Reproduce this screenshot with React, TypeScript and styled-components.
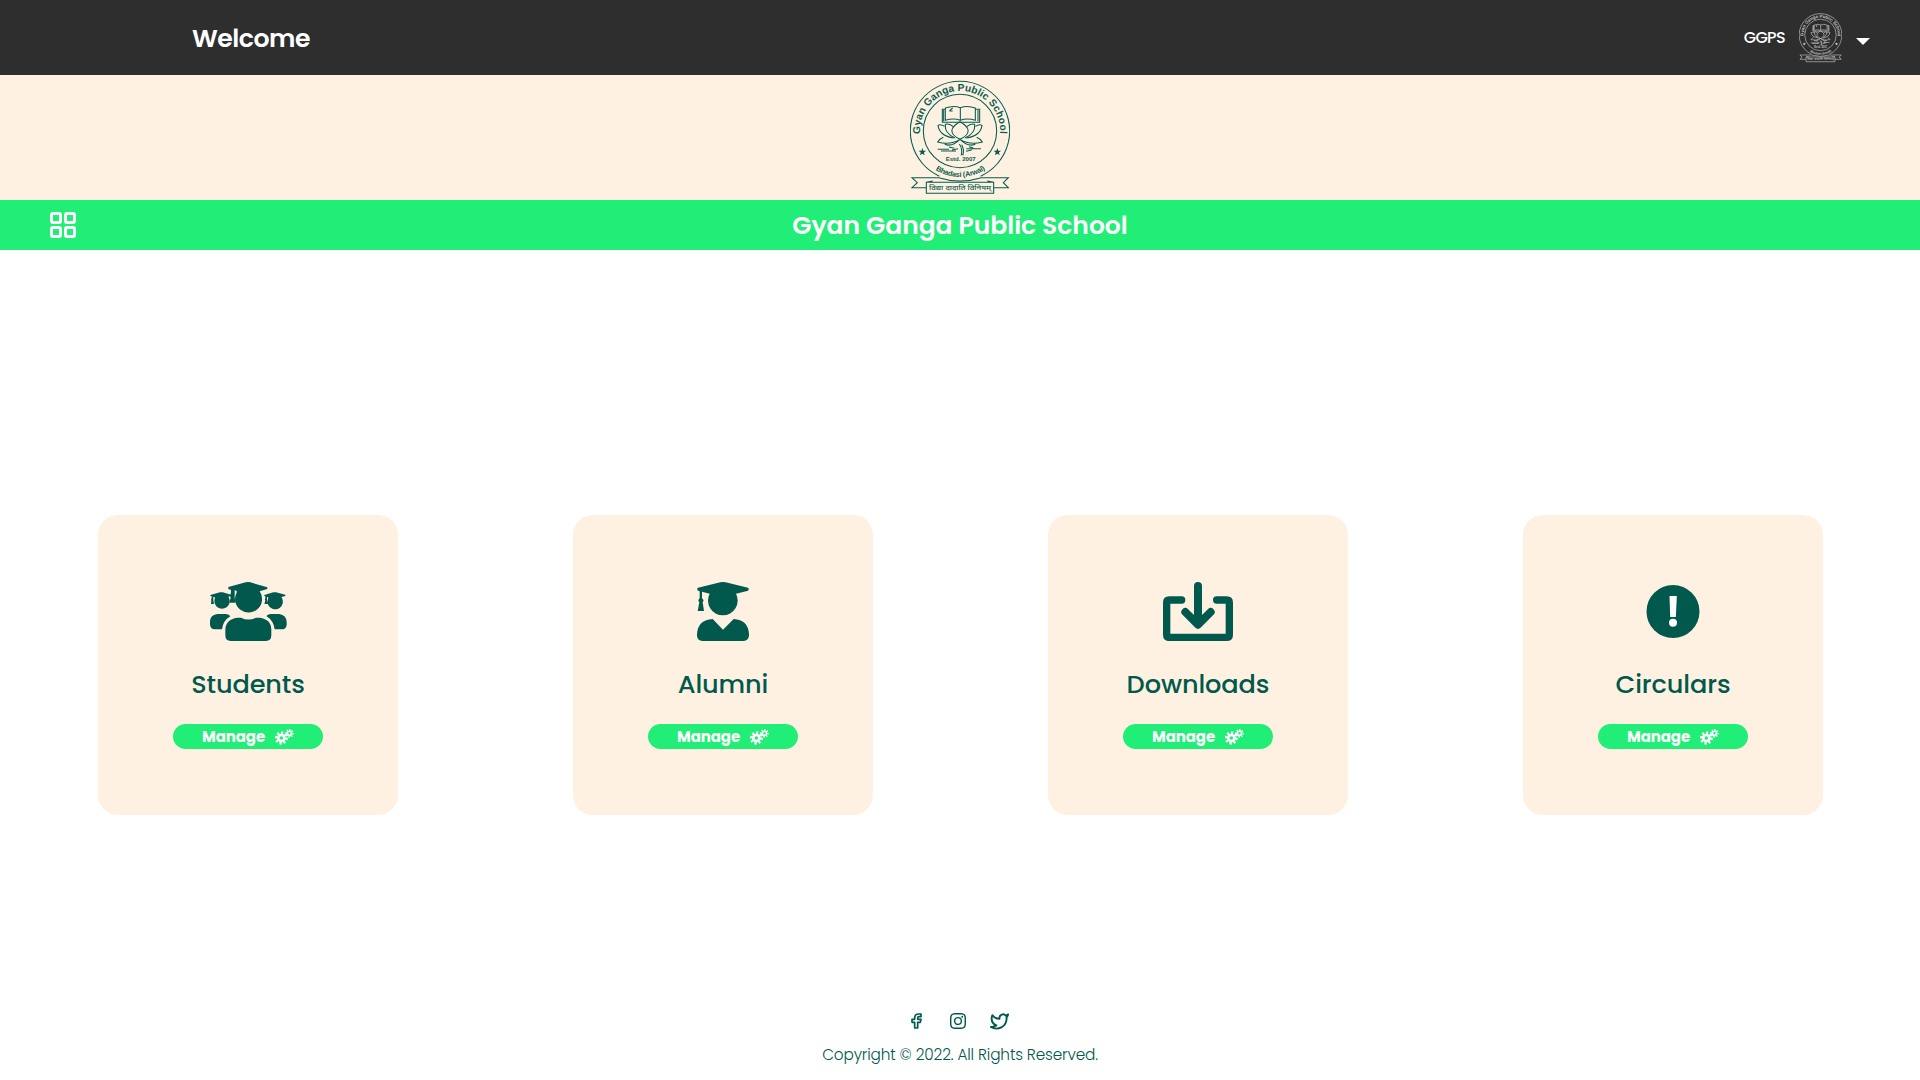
import React from "react";
import styled, { createGlobalStyle } from "styled-components";
import { FiTwitter } from "react-icons/fi";
import { BsInstagram } from "react-icons/bs";

const cream = "#fff1e2";
const green = "#20ee76";
const teal = "#00594c";
const dark = "#2e2e2e";

const GlobalStyle = createGlobalStyle`
  * { box-sizing: border-box; }
  body { margin: 0; background: #fff; font-family: Poppins, Inter, "Open Sans", sans-serif; }
  svg { display: block; flex: none; }
`;

const Page = styled.div`
  display: flex;
  flex-direction: column;
  height: 1080px;
  overflow: hidden;
`;

const TopBar = styled.header`
  display: flex;
  align-items: center;
  justify-content: space-between;
  height: 75px;
  padding: 0 50px 0 192px;
  background: ${dark};
  color: #fff;
`;

const Label = styled.span<{ $size: number; $weight: number; $track?: number }>`
  margin: 0;
  padding-top: 2px;
  font-size: ${(p) => p.$size}px;
  font-weight: ${(p) => p.$weight};
  letter-spacing: ${(p) => p.$track ?? 0}px;
  line-height: 1.5;
  white-space: nowrap;
`;

const Account = styled.div`
  display: flex;
  align-items: center;
`;

const GroupName = styled(Label)`
  padding-top: 0;
`;

const AvatarSlot = styled.div`
  margin: 0 14px 0 14px;
  padding-top: 1px;
`;

const Caret = styled.div`
  margin-top: 7px;
  border: 7.5px solid transparent;
  border-top-color: #fff;
  border-bottom: 0;
`;

const LogoBand = styled.section`
  display: flex;
  justify-content: center;
  height: 125px;
  padding-top: 5px;
  background: ${cream};
`;

const TitleBar = styled.nav`
  display: grid;
  grid-template-columns: 1fr auto 1fr;
  align-items: center;
  height: 50px;
  padding: 0 50px;
  background: ${green};
  color: #fff;
`;

const Main = styled.main`
  display: flex;
  flex: none;
  height: 830px;
  padding: 265px 9.5px 0 10.5px;
`;

const Column = styled.div`
  display: flex;
  flex: 1;
  justify-content: center;
`;

const Card = styled.article`
  display: flex;
  flex-direction: column;
  align-items: center;
  width: 300px;
  height: 300px;
  padding-top: 67px;
  border-radius: 20px;
  background: ${cream};
  color: ${teal};
`;

const CardIcon = styled.div`
  display: flex;
  align-items: center;
  height: 59px;
`;

const CardTitle = styled.h2`
  height: 38px;
  margin: 24px 0 21px;
  font-size: 25.6px;
  font-weight: 500;
  line-height: 38px;
  letter-spacing: -0.1px;
`;

const ManageButton = styled.button`
  display: flex;
  align-items: center;
  width: 150px;
  height: 25px;
  padding: 0 0 0 29px;
  border: 0;
  border-radius: 13px;
  background: ${green};
  color: #fff;
  font-family: inherit;
  gap: 10px;
`;

const Footer = styled.footer`
  display: flex;
  flex-direction: column;
  align-items: center;
  margin-top: -68px;
  color: ${teal};
`;

const Socials = styled.div`
  display: flex;
  align-items: center;
  height: 18px;
  margin-bottom: 12px;
`;

const InstagramSlot = styled.div`
  margin: 0 24px 0 28px;
`;

const starPoints = (cx: number, cy: number, r: number) =>
  Array.from({ length: 10 }, (_, i) => {
    const a = (Math.PI / 5) * i - Math.PI / 2;
    const q = i % 2 ? r * 0.42 : r;
    return `${cx + q * Math.cos(a)},${cy + q * Math.sin(a)}`;
  }).join(" ");

function Emblem({ width, color, id, stroke }: { width: number; color: string; id: string; stroke: number }) {
  const sans = '"Liberation Sans", Arial, sans-serif';
  return (
    <svg width={width} height={width * 1.15} viewBox="90 30 300 345" fill="none" stroke={color} strokeWidth={stroke}>
      <defs>
        <path id={`${id}-top`} d="M120.600 195 A120 120 0 1 1 359.400 195" />
        <path id={`${id}-bottom`} d="M129.800 266 A138 138 0 0 0 350.200 266" />
      </defs>
      <path d="M178 318.500 A149 149 0 1 1 302 318.500" />
      <circle cx="240" cy="183" r="110" />
      <g fill={color} stroke="none" fontFamily={sans} fontWeight="700">
        <text fontSize="30.500"><textPath href={`#${id}-top`} textLength="394" startOffset="3">Gyan Ganga Public School</textPath></text>
        <text fontSize="22"><textPath href={`#${id}-bottom`} textLength="158" startOffset="50">Bhadasi (Arwal)</textPath></text>
        <text x="197" y="273" fontSize="18" textLength="90" lengthAdjust="spacingAndGlyphs">Estd. 2007</text>
        <text x="147" y="361" fontSize="21" fontWeight="500" fontFamily={'"Noto Sans Devanagari", "Noto Sans", sans-serif'} textLength="186" lengthAdjust="spacingAndGlyphs">विद्या दादाति विनियम्</text>
        <polygon points={starPoints(127, 246, 12)} />
        <polygon points={starPoints(352, 246, 12)} />
      </g>
      <path d="M196 114 Q220 105 241 113 Q262 105 286 114 V151 Q262 143 241 151 Q220 143 196 151Z M241 113V151 M196 118H187V157H299V118H286 M191 120V154 M294 120V154 M209 122l9-8 M208 123h10" />
      <path d="M240 155 C209 172 206 192 240 208 C274 192 271 172 240 155Z" />
      <path d="M220 170 Q207 159 196 163 Q193 190 225 204 M260 170 Q273 159 284 163 Q287 190 255 204" />
      <path d="M194 169 Q181 161 174 166 Q178 197 221 204 M286 169 Q299 161 306 166 Q302 197 259 204" />
      <path d="M190 202 Q178 207 173 216 Q211 226 240 208 Q269 226 307 216 Q302 207 290 202 M194 222 Q214 233 240 208 Q266 233 286 222" />
      <path d="M245 224 Q253 238 249 254 H244 Q248 236 238 222 M173 238H207 M183 243H228 M207 231L223 235 M216 240L234 236 M259 236H303 M267 230L280 234 M258 244L275 240" />
      <path d="M139 337H341V370H139Z M139 353H96L112 338L96 323H176 Q240 343 304 323H385L370 338L385 353H341 M139 337L158 333 M341 337L322 333" />
    </svg>
  );
}

function DashboardIcon() {
  return (
    <svg width="26" height="26" viewBox="0 0 26 26" fill="none" stroke="#fff" strokeWidth="3">
      {[1.5, 15.5].map((x) => [1.5, 15.5].map((y) => <rect key={`${x}-${y}`} x={x} y={y} width="9" height="9" rx="1.4" />))}
    </svg>
  );
}

function StudentsIcon() {
  return (
    <svg width="77" height="59" viewBox="359 231 231 177" overflow="visible" fill="currentColor">
      <path d="M414 246L466 232Q473 230 480 232L531 247V252L508 259A40.500 40.500 0 1 1 439 263Q438 260 440 258L433 256V277L435 293H417L421 278Q418 274 421 270Q419 266 422 263V255L414 252Z" />
      <path d="M360 270L389 262Q393 261 397 262L422 269V273L414 275A23 23 0 1 1 373 282L374 277L369 276V285L371 297H362L363 287Q361 283 364 280V274L360 273Z" />
      <path d="M522 270L549 262Q553 261 557 262L585 269V273L573 276A23 23 0 1 1 533 282L534 277L530 276V285L533 297H522L525 287Q522 283 525 280V274L522 273Z" />
      <path d="M441 338H452Q474 349 497 338H508Q543 343 543 374V391Q543 408 527 408H421Q405 408 405 391V376Q405 343 441 338Z" />
      <path d="M382 327H407Q417 328 420 334Q398 347 395 373H374Q359 373 359 358V347Q361 329 382 327Z M541 327H567Q588 330 589 351V359Q588 373 573 373H553Q550 347 528 333Q533 327 541 327Z" />
    </svg>
  );
}

function AlumniIcon() {
  return (
    <svg width="52" height="59" viewBox="111 66 156 177" fill="currentColor">
      <path d="M114 83L181 67Q189 65 197 67L264 83Q269 87 264 92L228 101A44.500 44.500 0 1 1 149 101L126 95V115Q134 121 128 127L132 153H113L118 127Q112 121 119 115V94L114 92Q109 87 114 83Z" />
      <path d="M158 177L189 209L221 177Q264 179 267 222V227Q265 241 251 243H127Q112 241 111 227V222Q114 179 158 177Z" />
    </svg>
  );
}

function DownloadsIcon() {
  return (
    <svg width="70" height="59" viewBox="189 66 210 177" fill="none" stroke="currentColor" strokeLinecap="round" strokeLinejoin="round">
      <path d="M245 120H208Q200 120 200 128V224Q200 232 208 232H380Q388 232 388 224V128Q388 120 380 120H350" strokeWidth="22" />
      <path d="M294 78V188M256 156L294 194L332 156" strokeWidth="24" />
      <path d="M282 178H306L294 194Z" fill="currentColor" strokeWidth="8" />
    </svg>
  );
}

function CircularsIcon() {
  return (
    <svg width="53" height="53" viewBox="201.500 75 159 159" overflow="visible">
      <circle cx="279.500" cy="154.500" r="79.500" fill="currentColor" />
      <path d="M269 108H291L288 171H271Z" fill="#fff" />
      <circle cx="279.500" cy="188" r="12" fill="#fff" />
    </svg>
  );
}

const gearPath = (cx: number, cy: number, outer: number, root: number, hole: number, turn: number) => {
  const points: string[] = [];
  for (let i = 0; i < 8; i++) {
    const mid = (Math.PI / 4) * i + turn;
    [[-0.25, root], [-0.18, outer], [0.18, outer], [0.25, root]].forEach(([d, r]) =>
      points.push(`${(cx + r * Math.cos(mid + d)).toFixed(2)} ${(cy + r * Math.sin(mid + d)).toFixed(2)}`)
    );
  }
  return `M${points.join("L")}Z M${cx - hole} ${cy}a${hole} ${hole} 0 1 0 ${hole * 2} 0a${hole} ${hole} 0 1 0 ${-hole * 2} 0Z`;
};

function GearsIcon() {
  return (
    <svg width="19" height="16" viewBox="555 671 57 48" fill="#fff" fillRule="evenodd">
      <path d={gearPath(574, 698, 20, 13, 5.5, 0.15)} />
      <path d={gearPath(598.5, 684, 13, 8.5, 3.8, 0.1)} />
    </svg>
  );
}

function FacebookIcon() {
  return (
    <svg width="11" height="16" viewBox="0 0 33 48" fill="none" stroke="currentColor" strokeWidth="5" strokeLinejoin="round">
      <path d="M30 3H23Q11 3 11 15V19H3V28H11V45H20V28H28L30 19H20V15Q20 11 24 11H30Z" />
    </svg>
  );
}

const cards = [
  { title: "Students", icon: <StudentsIcon /> },
  { title: "Alumni", icon: <AlumniIcon /> },
  { title: "Downloads", icon: <DownloadsIcon /> },
  { title: "Circulars", icon: <CircularsIcon /> },
];

export default function App() {
  return (
    <Page>
      <GlobalStyle />
      <TopBar>
        <Label $size={25.2} $weight={600} $track={-0.5}>Welcome</Label>
        <Account>
          <GroupName $size={16} $weight={500} $track={-0.65}>GGPS</GroupName>
          <AvatarSlot><Emblem width={43} color="#c4c4c4" id="avatar" stroke={4.5} /></AvatarSlot>
          <Caret />
        </Account>
      </TopBar>
      <LogoBand><Emblem width={100} color="#065d50" id="school" stroke={3.2} /></LogoBand>
      <TitleBar>
        <DashboardIcon />
        <Label as="h1" $size={25} $weight={600}>Gyan Ganga Public School</Label>
      </TitleBar>
      <Main>
        {cards.map((c) => (
          <Column key={c.title}>
            <Card>
              <CardIcon>{c.icon}</CardIcon>
              <CardTitle>{c.title}</CardTitle>
              <ManageButton><Label $size={15} $weight={700} $track={-0.1}>Manage</Label><GearsIcon /></ManageButton>
            </Card>
          </Column>
        ))}
      </Main>
      <Footer>
        <Socials>
          <FacebookIcon />
          <InstagramSlot><BsInstagram size={16} /></InstagramSlot>
          <FiTwitter size={19} strokeWidth={2.4} />
        </Socials>
        <Label $size={15.3} $weight={300} $track={-0.15}>Copyright © 2022. All Rights Reserved.</Label>
      </Footer>
    </Page>
  );
}
